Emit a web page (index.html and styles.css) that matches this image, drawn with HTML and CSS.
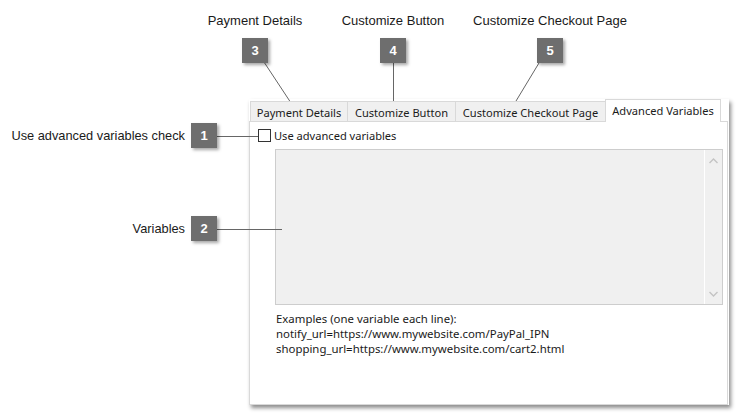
FILE: index.html
```html
<!DOCTYPE html>
<html>
<head>
<meta charset="utf-8">
<link rel="stylesheet" href="styles.css">
</head>
<body>
<div class="shot">
  <div class="tabstrip">
    <div class="tab t1">Payment Details</div>
    <div class="tab t2">Customize Button</div>
    <div class="tab t3">Customize Checkout Page</div>
    <div class="tab sel">Advanced Variables</div>
  </div>
  <div class="page">
    <label class="check-row"><span class="box"></span><span>Use advanced variables</span></label>
    <div class="memo">
      <div class="memo-area"></div>
      <div class="scroll">
        <svg class="arrow" width="9" height="6" viewBox="0 0 9 6"><path d="M0.5 5 L4.5 1 L8.5 5" fill="none" stroke="#c4c4c4" stroke-width="1.4"/></svg>
        <svg class="arrow" width="9" height="6" viewBox="0 0 9 6"><path d="M0.5 1 L4.5 5 L8.5 1" fill="none" stroke="#c4c4c4" stroke-width="1.4"/></svg>
      </div>
    </div>
    <div class="examples">
      <div>Examples (one variable each line):</div>
      <div>notify_url=https://www.mywebsite.com/PayPal_IPN</div>
      <div>shopping_url=https://www.mywebsite.com/cart2.html</div>
    </div>
  </div>
</div>

<svg class="leaders" width="741" height="416" viewBox="0 0 741 416">
  <g stroke="#666" stroke-width="1" fill="none">
    <path d="M217 136.5 H258"/>
    <path d="M217 229.5 H282"/>
    <path d="M262 59 L293 106"/>
    <path d="M393.5 58 V103"/>
    <path d="M542 58 L513 106"/>
  </g>
</svg>

<div class="callout top c3"><div class="label">Payment Details</div><div class="badge">3</div></div>
<div class="callout top c4"><div class="label">Customize Button</div><div class="badge">4</div></div>
<div class="callout top c5"><div class="label">Customize Checkout Page</div><div class="badge">5</div></div>
<div class="callout side c1"><div class="label">Use advanced variables check</div><div class="badge">1</div></div>
<div class="callout side c2"><div class="label">Variables</div><div class="badge">2</div></div>
</body>
</html>
```
FILE: styles.css
```css
html, body {
  margin: 0;
  padding: 0;
  background: #fff;
}
body {
  width: 741px;
  height: 416px;
  position: relative;
  overflow: hidden;
  padding-top: 99px;
  box-sizing: border-box;
}
.shot {
  margin-left: 249px;
  width: 480px;
  height: 306px;
  background: #fff;
  box-shadow: 2px 3px 4px rgba(0,0,0,0.45);
  display: flex;
  flex-direction: column;
  font-family: "Noto Sans", sans-serif;
  font-size: 11.1px;
  color: #1a1a1a;
}
.tabstrip {
  display: flex;
  align-items: flex-end;
  height: 22px;
  padding-left: 1px;
  position: relative;
  z-index: 1;
}
.tab {
  box-sizing: border-box;
  height: 20px;
  border: 1px solid #d9d9d9;
  border-bottom: none;
  border-right: none;
  background: #f0f0f0;
  display: flex;
  align-items: center;
  justify-content: center;
  white-space: nowrap;
  padding-top: 1px;
}
.t1 { width: 97px; }
.t2 { width: 108px; }
.t3 { width: 150px; }
.sel {
  width: 116px;
  height: 23px;
  margin-bottom: -1px;
  background: #fff;
  border-right: 1px solid #d9d9d9;
  padding-bottom: 3px;
}
.page {
  flex: 1;
  border: 1px solid #d9d9d9;
  margin-right: 1px;
  padding: 7px 0 0 8px;
  display: flex;
  flex-direction: column;
}
.check-row {
  display: flex;
  align-items: center;
  gap: 3px;
  height: 13px;
}
.box {
  width: 13px;
  height: 13px;
  box-sizing: border-box;
  border: 1px solid #333;
  background: #fff;
}
.memo {
  margin: 7px 0 0 17px;
  width: 448px;
  height: 156px;
  box-sizing: border-box;
  border: 1px solid #cdcdcd;
  background: #f0f0f0;
  display: flex;
}
.memo-area { flex: 1; }
.scroll {
  width: 17px;
  border-left: 1px solid #fff;
  display: flex;
  flex-direction: column;
  justify-content: space-between;
  align-items: center;
  padding: 8px 0 7px;
}
.arrow { display: block; }
.examples {
  margin: 6px 0 0 18px;
  line-height: 15px;
  font-size: 11.4px;
}

.leaders {
  position: absolute;
  left: 0;
  top: 0;
}
.callout {
  position: absolute;
  font-family: "Liberation Sans", Arial, sans-serif;
  font-size: 13px;
  color: #1a1a1a;
}
.side .label { font-size: 12.8px; }
.badge {
  width: 26px;
  height: 25px;
  background: #6e6e6e;
  color: #fff;
  font-weight: bold;
  font-size: 13px;
  display: flex;
  align-items: center;
  justify-content: center;
  box-shadow: 2px 2px 3px rgba(0,0,0,0.35);
}
.top {
  display: flex;
  flex-direction: column;
  align-items: center;
  gap: 10px;
  top: 13px;
  width: 200px;
}
.top .label { line-height: 15px; }
.c3 { left: 155px; }
.c4 { left: 293px; }
.c5 { left: 450px; }
.side {
  display: flex;
  align-items: center;
  gap: 6px;
  right: 524px;
}
.c1 { top: 123px; }
.c2 { top: 216px; }
```
